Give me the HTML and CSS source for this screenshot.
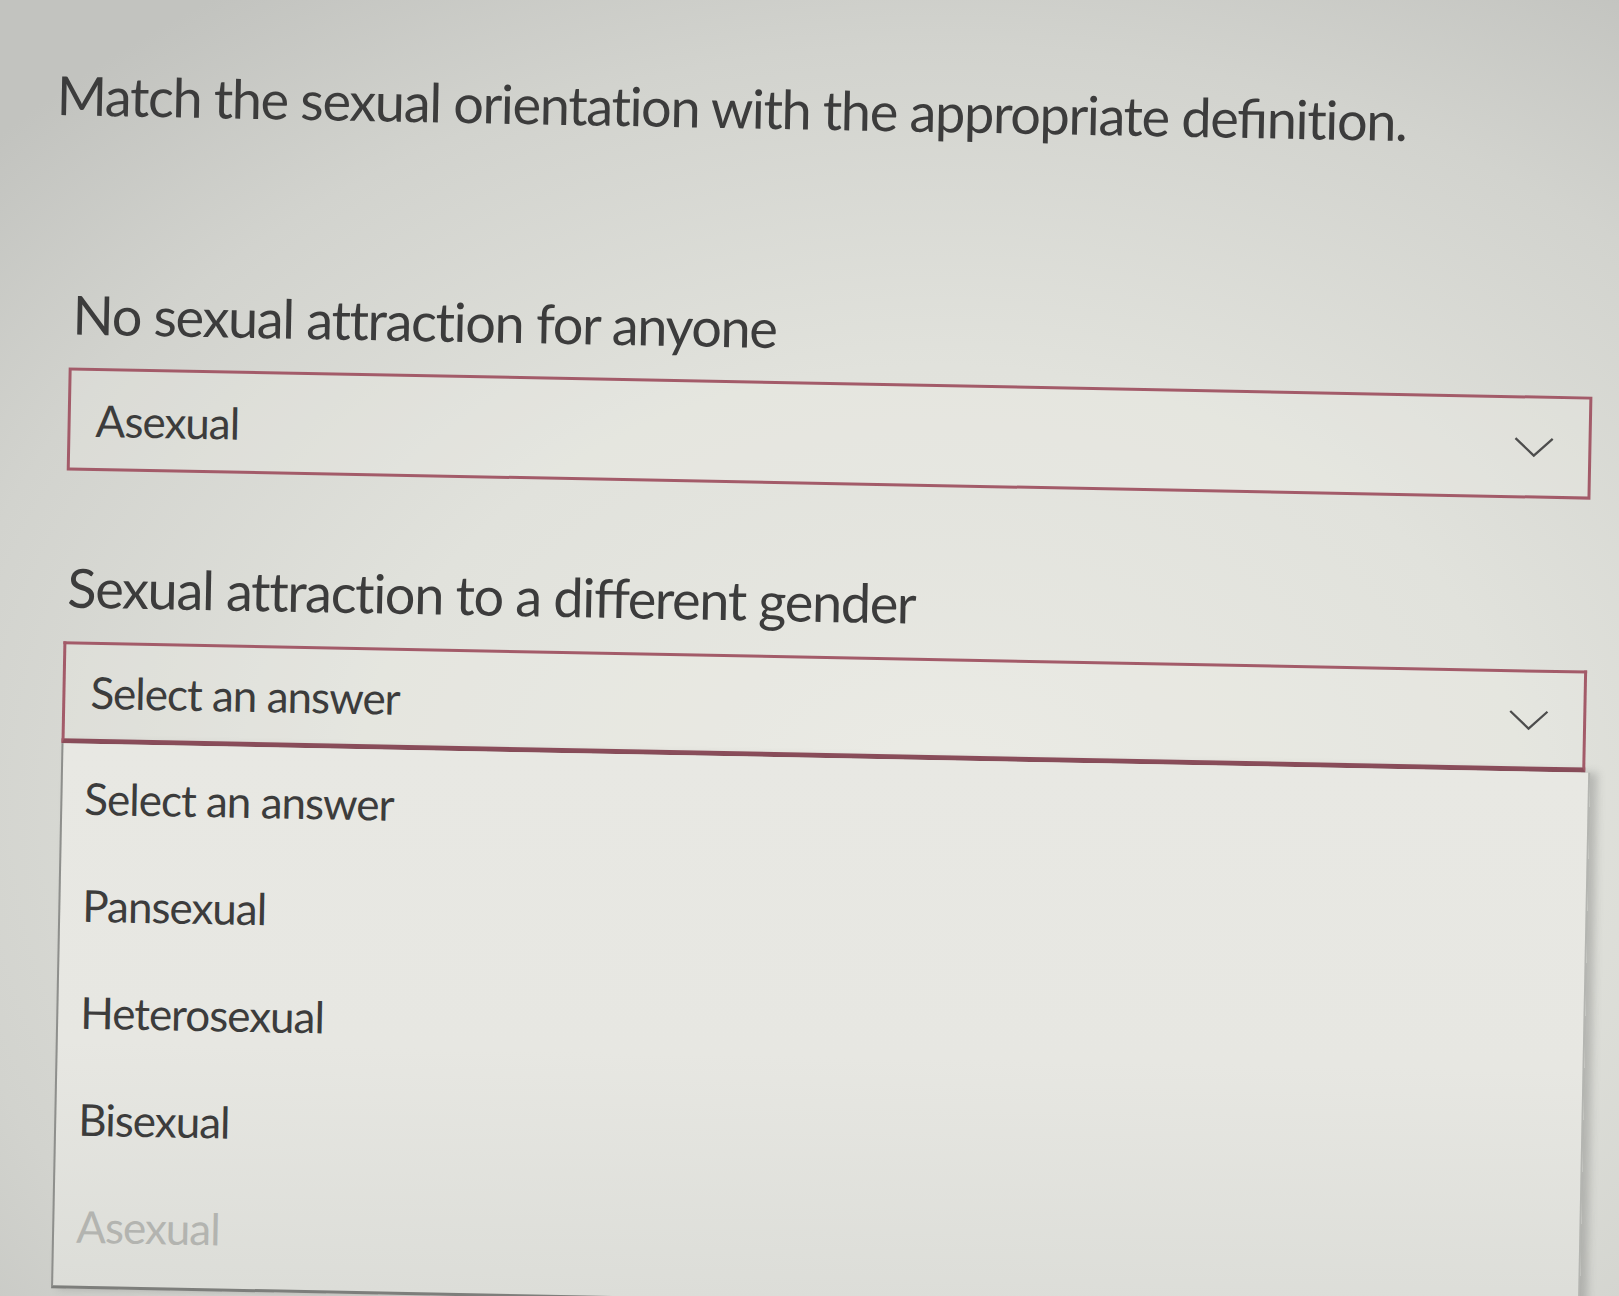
FILE: index.html
```html
<!DOCTYPE html>
<html lang="en">
<head>
<meta charset="utf-8">
<title>Match the sexual orientation</title>
<link rel="stylesheet" href="styles.css">
</head>
<body>
<main class="page">
  <h1 class="prompt">Match the sexual orientation with the appropriate deﬁnition.</h1>

  <section class="item item-first">
    <p class="label">No sexual attraction for anyone</p>
    <div class="select">
      <span class="select-value">Asexual</span>
      <svg class="chevron" viewBox="0 0 42 22" aria-hidden="true"><path d="M1.5 2 L21 20 L40.5 2" fill="none" stroke="#4d4d4d" stroke-width="2.4"/></svg>
    </div>
  </section>

  <section class="item item-second">
    <p class="label">Sexual attraction to a diﬀerent gender</p>
    <div class="select select-open">
      <span class="select-value">Select an answer</span>
      <svg class="chevron" viewBox="0 0 42 22" aria-hidden="true"><path d="M1.5 2 L21 20 L40.5 2" fill="none" stroke="#4d4d4d" stroke-width="2.4"/></svg>
    </div>
    <ul class="menu">
      <li class="option">Select an answer</li>
      <li class="option">Pansexual</li>
      <li class="option">Heterosexual</li>
      <li class="option">Bisexual</li>
      <li class="option option-disabled">Asexual</li>
    </ul>
  </section>
</main>
</body>
</html>
```
FILE: styles.css
```css
html, body {
  margin: 0;
  padding: 0;
  height: 100%;
}
body {
  background:
    radial-gradient(ellipse 80% 75% at 58% 62%, #e9e9e3 0%, #e1e2dc 45%, #d2d3ce 78%, #c2c3bf 100%);
  font-family: "Lato", "Open Sans", sans-serif;
  color: #3c3c3c;
  overflow: hidden;
}
.page {
  width: 1524px;
  padding: 78px 0 0 62px;
  transform: rotate(1.1deg);
  transform-origin: 826px 723px;
}
.prompt {
  margin: 0 0 0 -17px;
  font-weight: 400;
  font-size: 54px;
  line-height: 64px;
  letter-spacing: -1.3px;
  white-space: nowrap;
}
.item {
  display: flex;
  flex-direction: column;
}
.item-first {
  margin-top: 155px;
}
.item-second {
  margin-top: 85px;
}
.label {
  margin: 0 0 21px 3px;
  font-size: 54px;
  line-height: 64px;
  letter-spacing: -1.3px;
  white-space: nowrap;
}
.item-second .label {
  margin-bottom: 22px;
}
.select {
  height: 97px;
  border: 3px solid #a35b69;
  display: flex;
  align-items: center;
  justify-content: space-between;
  padding: 0 34px 0 25px;
  background: rgba(238, 238, 232, 0.3);
}
.select-value {
  font-size: 44px;
  letter-spacing: -1px;
}
.chevron {
  width: 41px;
  height: 21px;
  flex: none;
}
.select-open {
  height: 94px;
  border-bottom-width: 5px;
  border-bottom-color: #8e4d5b;
}
.menu {
  list-style: none;
  margin: 0 -5px 0 0;
  padding: 0 0 7px;
  border-left: 2px solid #8e8f8c;
  border-right: 2px solid #b4b5b1;
  border-bottom: 3px solid #7d7e7b;
  background: linear-gradient(180deg, #e8e8e3 0%, #e7e7e2 55%, #dcddd8 100%);
  box-shadow: 7px 0 9px rgba(80, 80, 80, 0.28);
}
.option {
  height: 107px;
  display: flex;
  align-items: center;
  padding-left: 22px;
  font-size: 44px;
  letter-spacing: -1px;
}
.option-disabled {
  color: #b3b4b0;
}
```
